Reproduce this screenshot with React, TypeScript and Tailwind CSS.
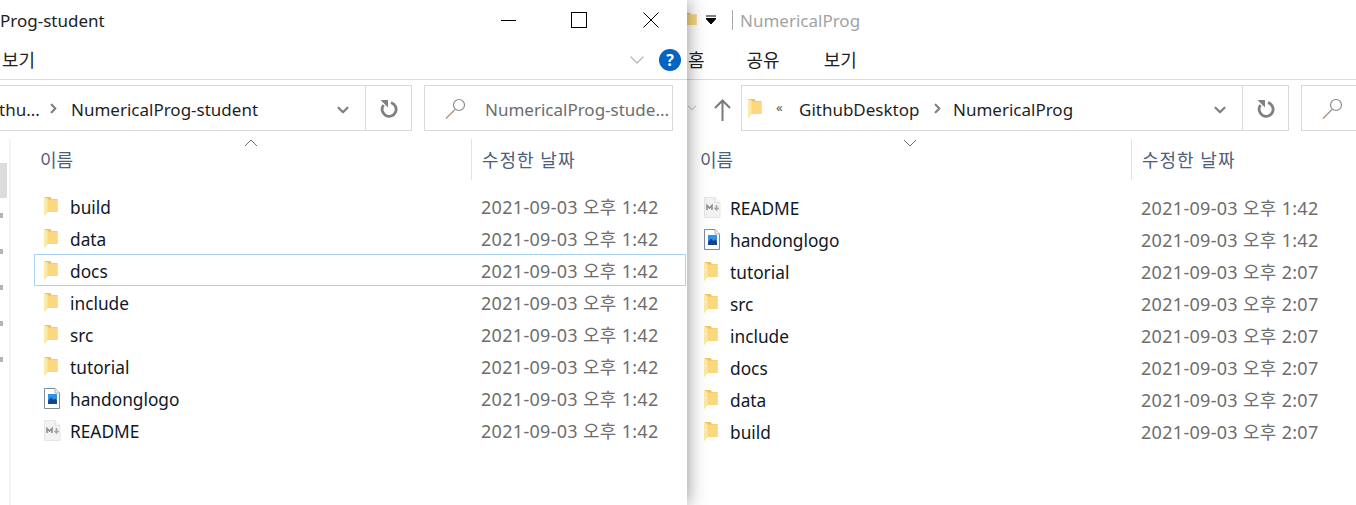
import { ChevronDown, ChevronRight } from 'lucide-react'

type Kind = 'folder' | 'image' | 'md'

interface FileRow {
  name: string
  date: string
  kind: Kind
}

const leftFiles: FileRow[] = [
  { name: 'build', date: '2021-09-03 오후 1:42', kind: 'folder' },
  { name: 'data', date: '2021-09-03 오후 1:42', kind: 'folder' },
  { name: 'docs', date: '2021-09-03 오후 1:42', kind: 'folder' },
  { name: 'include', date: '2021-09-03 오후 1:42', kind: 'folder' },
  { name: 'src', date: '2021-09-03 오후 1:42', kind: 'folder' },
  { name: 'tutorial', date: '2021-09-03 오후 1:42', kind: 'folder' },
  { name: 'handonglogo', date: '2021-09-03 오후 1:42', kind: 'image' },
  { name: 'README', date: '2021-09-03 오후 1:42', kind: 'md' },
]

const rightFiles: FileRow[] = [
  { name: 'README', date: '2021-09-03 오후 1:42', kind: 'md' },
  { name: 'handonglogo', date: '2021-09-03 오후 1:42', kind: 'image' },
  { name: 'tutorial', date: '2021-09-03 오후 2:07', kind: 'folder' },
  { name: 'src', date: '2021-09-03 오후 2:07', kind: 'folder' },
  { name: 'include', date: '2021-09-03 오후 2:07', kind: 'folder' },
  { name: 'docs', date: '2021-09-03 오후 2:07', kind: 'folder' },
  { name: 'data', date: '2021-09-03 오후 2:07', kind: 'folder' },
  { name: 'build', date: '2021-09-03 오후 2:07', kind: 'folder' },
]

function FolderIcon({ className = '' }: { className?: string }) {
  return (
    <svg width="14" height="21" viewBox="0 0 15 21" preserveAspectRatio="none" className={`shrink-0 ${className}`}>
      <path d="M0 1 H7 L8.5 3 H14.5 V16 H3 Z" fill="#efc25e" />
      <path d="M4 3.5 H14 V16 H4 Z" fill="#fbd87e" />
      <path d="M0 1 L4 2.5 V16.5 L0 20.5 Z" fill="#fde9a9" />
    </svg>
  )
}

function ImageIcon() {
  return (
    <svg width="16" height="21" viewBox="0 0 16 21" className="shrink-0">
      <path d="M0.5 0.5 H11 L15.5 5 V20.5 H0.5 Z" fill="#fff" stroke="#7f8a96" />
      <path d="M11 0.5 V5 H15.5" fill="#eef1f4" stroke="#aab2bb" />
      <rect x="4" y="6" width="9" height="10" fill="#2f94e6" />
      <path d="M4 16 V13 L7 9.5 L9.5 12 L11 10.5 L13 12.5 V16 Z" fill="#17438a" />
    </svg>
  )
}

function MdIcon() {
  return (
    <svg width="17" height="21" viewBox="0 0 17 21" className="shrink-0">
      <path d="M0.5 0.5 H11 L16 5.5 V20.5 H0.5 Z" fill="#f2f2f2" stroke="#e6e6e6" />
      <path d="M11 0.5 V5.5 H16" fill="#fafafa" stroke="#dedede" />
      <path d="M3 13 V8.5 L5.5 11 L8 8.5 V13" fill="none" stroke="#8f8f8f" strokeWidth="1.6" />
      <path d="M12.5 8 V12.5 M10.5 10.8 L12.5 13 L14.5 10.8" fill="none" stroke="#a3a3a3" strokeWidth="1.4" />
    </svg>
  )
}

function RowIcon({ kind }: { kind: Kind }) {
  if (kind === 'folder') return <FolderIcon />
  if (kind === 'image') return <ImageIcon />
  return <MdIcon />
}

function Row({ file, selected }: { file: FileRow; selected?: boolean }) {
  return (
    <div
      className={`flex h-8 items-center border ${selected ? 'border-[#a9d5f3]' : 'border-transparent'}`}
    >
      <div className="ml-[9px] flex w-[26px] shrink-0 items-center">
        <RowIcon kind={file.kind} />
      </div>
      <span className="w-[411px] shrink-0 pt-[4px] text-[17.3px] text-[#101828]">{file.name}</span>
      <span className="whitespace-nowrap pt-[2px] text-[18px] tracking-[0.3px] text-[#6d6d6d]">{file.date}</span>
    </div>
  )
}

function Header({ caret }: { caret: 'up' | 'down' }) {
  return (
    <div className="flex h-[41px] items-center text-[18px] text-[#4c607a]">
      <span className="w-[437px] shrink-0 pl-[6px] pt-[2px]">이름</span>
      <div className="flex h-full items-center border-l border-[#e3e3e3] pl-[10px] pt-[2px] tracking-[1px]">수정한 날짜</div>
      <svg
        width="14"
        height="8"
        viewBox="0 0 14 8"
        className={`absolute top-[139px] ${caret === 'up' ? 'left-[244px]' : 'left-[216px] rotate-180'}`}
      >
        <path d="M1 7 L7 1 L13 7" fill="none" stroke="#6f6f6f" />
      </svg>
    </div>
  )
}

function Magnifier() {
  return (
    <svg width="21" height="21" viewBox="0 0 21 21" className="shrink-0">
      <circle cx="14" cy="7" r="5.5" fill="none" stroke="#8a8a8a" strokeWidth="1.2" />
      <path d="M10 11.5 L1 20.5" stroke="#b08c78" strokeWidth="1.3" />
    </svg>
  )
}

function Refresh() {
  return (
    <svg width="18" height="20" viewBox="0 0 18 20" className="mt-px">
      <path d="M11 3.6 A7 7 0 1 1 3.6 6" fill="none" stroke="#808080" strokeWidth="2.8" />
      <path d="M0.5 1 H8 V8.5 Z" fill="#808080" />
    </svg>
  )
}

function WindowControls() {
  return (
    <div className="flex items-center">
      <svg width="16" height="16" viewBox="0 0 16 16" className="mr-[54px]">
        <path d="M0 8.5 H15" stroke="#000" />
      </svg>
      <svg width="16" height="16" viewBox="0 0 16 16" className="mr-[56px]">
        <rect x="0.5" y="0.5" width="15" height="15" fill="none" stroke="#000" />
      </svg>
      <svg width="16" height="16" viewBox="0 0 16 16">
        <path d="M0.5 0.5 L15.5 15.5 M15.5 0.5 L0.5 15.5" stroke="#000" />
      </svg>
    </div>
  )
}

export default function App() {
  return (
    <div
      className="flex h-[505px] w-[1356px] overflow-hidden bg-white text-[17px] text-[#1f1f1f]"
      style={{ fontFamily: '"Noto Sans", "Noto Sans CJK KR", sans-serif' }}
    >
      {/* left window, sits on top of the other one */}
      <div className="relative z-10 w-[687px] shrink-0 bg-white shadow-[0_0_18px_rgba(0,0,0,0.45)]">
        <div className="flex h-10 items-center justify-between pr-[28px]">
          <span className="pt-[2px] text-[#222]">Prog-student</span>
          <WindowControls />
        </div>
        <div className="flex h-10 items-center justify-between border-b border-[#dadada] pl-[2px] pr-[6px]">
          <span className="pt-[2px] text-[18px]">보기</span>
          <div className="flex items-center gap-[10px]">
            <ChevronDown size={24} strokeWidth={1.4} className="text-[#b9b9b9]" />
            <div className="flex h-[22px] w-[22px] items-center justify-center rounded-full bg-[#0563c1] text-[16px] font-bold text-white">
              ?
            </div>
          </div>
        </div>

        <div className="mt-[5px] flex h-[46px] items-stretch">
          <div className="-ml-px flex w-[413px] items-center border border-[#d9d9d9]">
            <span className="ml-[-1px] w-[47px] shrink-0 overflow-hidden whitespace-nowrap pt-[4px]">thu...</span>
            <ChevronRight size={15} strokeWidth={3.5} className="mr-[10px] mt-px shrink-0 text-[#808080]" />
            <span className="w-[263px] shrink-0 whitespace-nowrap pt-[4px]">NumericalProg-student</span>
            <ChevronDown size={18} strokeWidth={3} className="mt-[3px] shrink-0 text-[#808080]" />
            <div className="ml-[13px] flex h-full flex-1 items-center justify-center border-l border-[#d9d9d9]">
              <Refresh />
            </div>
          </div>
          <div className="ml-3 flex w-[249px] items-center border border-[#d9d9d9] pl-[20px]">
            <Magnifier />
            <span className="ml-[19px] whitespace-nowrap pt-[4px] text-[#6d6d6d]">NumericalProg-stude...</span>
          </div>
        </div>

        <div className="mt-2 flex">
          <div className="relative h-[370px] w-[11px] shrink-0 border-r-2 border-[#f3f3f3]">
            <div className="absolute left-0 top-[24px] h-[35px] w-[7px] bg-[#dcdcdc]" />
            {[74, 110, 146, 182, 218].map(y => (
              <div key={y} className="absolute left-0 h-[5px] w-[3px] bg-[#b4b4b4]" style={{ top: y }} />
            ))}
          </div>
          <div className="flex-1 pl-[23px] pr-px">
            <Header caret="up" />
            <div className="mt-[10px]">
              {leftFiles.map(f => (
                <Row key={f.name} file={f} selected={f.name === 'docs'} />
              ))}
            </div>
          </div>
        </div>
      </div>

      {/* right window */}
      <div className="relative flex-1">
        <div className="flex h-10 items-center">
          <FolderIcon className="-ml-[4px] h-[17px]" />
          <svg width="10" height="10" viewBox="0 0 10 10" className="ml-[9px]">
            <path d="M0 1 H10 M0 3.5 H10 L5 9 L0 3.5" fill="#000" stroke="#000" />
          </svg>
          <div className="ml-[16px] h-5 border-l border-[#a8a8a8]" />
          <span className="ml-[7px] pt-[2px] text-[#a3a3a3]">NumericalProg</span>
        </div>
        <div className="flex h-10 items-center border-b border-[#dadada] pl-[1px] pt-[2px] text-[18px]">
          <span className="mr-[42px]">홈</span>
          <span className="mr-[44px]">공유</span>
          <span>보기</span>
        </div>

        <div className="mt-[5px] flex h-[46px] items-stretch">
          <div className="flex w-[54px] items-center">
            <ChevronDown size={14} strokeWidth={2.5} className="-ml-[2px] text-[#d6d6d6]" />
            <svg width="17" height="22" viewBox="0 0 17 22" className="ml-[15px] mt-[3px]">
              <path d="M8.5 1.5 V22 M1 9 L8.5 1.5 L16 9" fill="none" stroke="#7a7a7a" strokeWidth="2" />
            </svg>
          </div>
          <div className="flex w-[548px] items-center border border-[#d9d9d9] pl-[6px]">
            <FolderIcon />
            <span className="ml-[14px] w-[23px] text-[13px] text-[#555]">«</span>
            <span className="w-[131px] shrink-0 whitespace-nowrap pt-[4px]">GithubDesktop</span>
            <ChevronRight size={15} strokeWidth={3.5} className="mt-px shrink-0 text-[#808080]" />
            <span className="ml-[8px] w-[258px] shrink-0 whitespace-nowrap pt-[4px]">NumericalProg</span>
            <ChevronDown size={18} strokeWidth={3} className="mt-[3px] shrink-0 text-[#808080]" />
            <div className="ml-[13px] flex h-full flex-1 items-center justify-center border-l border-[#d9d9d9]">
              <Refresh />
            </div>
          </div>
          <div className="ml-3 flex flex-1 items-center border border-r-0 border-[#d9d9d9] pl-[20px]">
            <Magnifier />
          </div>
        </div>

        <div className="mt-2 pl-[7px]">
          <Header caret="down" />
          <div className="mt-[11px]">
            {rightFiles.map(f => (
              <Row key={f.name} file={f} />
            ))}
          </div>
        </div>
      </div>
    </div>
  )
}
